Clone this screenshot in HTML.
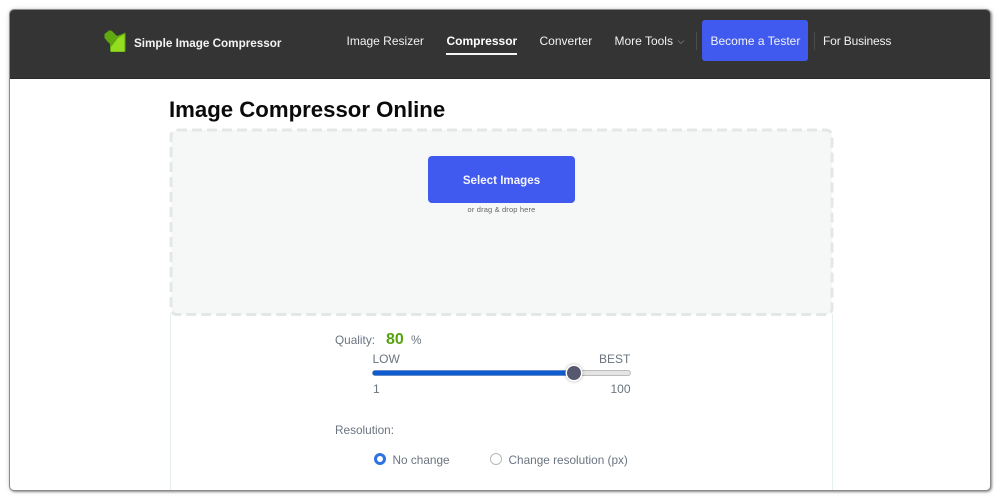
<!DOCTYPE html>
<html>
<head>
<meta charset="utf-8">
<style>
html,body{margin:0;padding:0;background:#fff;}
body{width:1000px;height:500px;position:relative;overflow:hidden;font-family:"Liberation Sans",Arial,sans-serif;}
.a{position:absolute;white-space:nowrap;}
#win{position:absolute;left:10px;top:10px;width:980px;height:480px;box-sizing:border-box;border-radius:4px;background:#fff;box-shadow:0 0 0 1px #8a8a8a,1px 1px 2px 1px rgba(60,60,60,.55),0 0 6px rgba(0,0,0,.2);}
#nav{position:absolute;left:10px;top:10px;width:980px;height:68px;background:#343434;border-radius:4px 4px 0 0;border-bottom:1px solid #2a2a2a;}
.n{color:#f2f2f2;font-size:12px;line-height:14px;}
.g{color:#6b7480;}
</style>
</head>
<body>
<div id="win"></div>
<div id="nav"></div>

<svg class="a" style="left:103px;top:29px" width="24" height="24" viewBox="0 0 24 24">
<path d="M1.500 5 L6 1.500 Q8 1 9.500 2.500 L14 7 L18 5.500 L22.500 3.500 L22.500 21.500 Q22.500 23 21 23 L8.500 23 Q7 23 7 21.500 L7 15 L4 12 L1.500 9 Z" fill="#5fa80f"/>
<path d="M8 22.500 L8 18 L15 9 L21.500 5 L21.500 22.500 Z" fill="#93dc22"/>
</svg>
<div class="a" style="left:134px;top:37px;color:#f4f4f4;font-size:11.700px;font-weight:bold;line-height:14px;">Simple Image Compressor</div>

<div class="a n" style="left:346.500px;top:34px;">Image Resizer</div>
<div class="a n" style="left:446.500px;top:34px;font-weight:bold;color:#fff;">Compressor</div>
<div class="a" style="left:446px;top:53px;width:71px;height:2px;background:#f5f5f5;"></div>
<div class="a n" style="left:539.500px;top:34px;">Converter</div>
<div class="a n" style="left:614.500px;top:34px;">More Tools</div>
<svg class="a" style="left:677px;top:39px" width="8" height="6" viewBox="0 0 8 6"><path d="M1 1.500 L4 4.500 L7 1.500" fill="none" stroke="#666" stroke-width="1"/></svg>
<div class="a" style="left:696px;top:32px;width:1px;height:18px;background:#4c4c4c;"></div>
<div class="a" style="left:702px;top:20px;width:106px;height:41px;background:#4059ee;border-radius:3px;"></div>
<div class="a n" style="left:710.500px;top:34px;">Become a Tester</div>
<div class="a" style="left:814px;top:32px;width:1px;height:18px;background:#4c4c4c;"></div>
<div class="a n" style="left:823px;top:34px;letter-spacing:-.15px;">For Business</div>

<div class="a" style="left:169px;top:97px;color:#0a0a0a;font-size:22.200px;font-weight:bold;line-height:26px;">Image Compressor Online</div>

<div class="a" style="left:170px;top:314px;width:663px;height:176px;box-sizing:border-box;border-left:1px solid #e6efec;border-right:1px solid #e6efec;"></div>
<svg class="a" style="left:169px;top:128px" width="665" height="189" viewBox="0 0 665 189">
<rect x="2" y="2" width="661" height="184.500" rx="6" fill="#f6f7f7" stroke="#e3e8e6" stroke-width="3" stroke-dasharray="10 5"/>
</svg>

<div class="a" style="left:428px;top:156px;width:147px;height:47px;background:#4059ee;border-radius:4px;"></div>
<div class="a" style="left:428px;top:174px;width:147px;text-align:center;color:#f4f5ff;font-size:11.600px;font-weight:bold;line-height:14px;">Select Images</div>
<div class="a" style="left:428px;top:204.500px;width:147px;text-align:center;color:#666;font-size:7.500px;line-height:9px;letter-spacing:.15px;">or drag &amp; drop here</div>

<div class="a g" style="left:335px;top:333px;font-size:11.800px;line-height:14px;">Quality:</div>
<div class="a" style="left:386px;top:332px;color:#55a30f;font-size:16px;font-weight:bold;line-height:16px;">80</div>
<div class="a g" style="left:411px;top:333px;font-size:11.800px;line-height:14px;">%</div>
<div class="a g" style="left:372.500px;top:352px;font-size:12px;line-height:14px;">LOW</div>
<div class="a g" style="left:599px;top:352px;font-size:12px;line-height:14px;">BEST</div>
<div class="a" style="left:373px;top:371px;width:257px;height:4px;background:#e4e4e4;border-radius:2px;box-shadow:0 0 0 1px #bdbdbd;"></div>
<div class="a" style="left:373px;top:371px;width:200px;height:4px;background:#0f5cd0;border-radius:2px;box-shadow:0 0 0 .5px #0f5cd0;"></div>
<div class="a" style="left:567px;top:366px;width:14px;height:14px;background:#55586e;border-radius:50%;box-shadow:0 0 0 1.500px #fff,0 0 3px 1.500px rgba(0,0,0,.3);"></div>
<div class="a g" style="left:373px;top:382px;font-size:12px;line-height:14px;">1</div>
<div class="a g" style="left:610.500px;top:382px;font-size:12px;line-height:14px;">100</div>

<div class="a g" style="left:335px;top:423px;font-size:11.800px;line-height:14px;">Resolution:</div>
<div class="a" style="left:374px;top:453px;width:12px;height:12px;box-sizing:border-box;border:3.500px solid #2f72e4;border-radius:50%;background:#fff;"></div>
<div class="a g" style="left:392.500px;top:452.500px;font-size:11.800px;line-height:14px;">No change</div>
<div class="a" style="left:490px;top:453px;width:12px;height:12px;box-sizing:border-box;border:1px solid #b5b9bd;border-radius:50%;background:#fff;"></div>
<div class="a g" style="left:508.500px;top:452.500px;font-size:11.800px;line-height:14px;">Change resolution (px)</div>
</body>
</html>
